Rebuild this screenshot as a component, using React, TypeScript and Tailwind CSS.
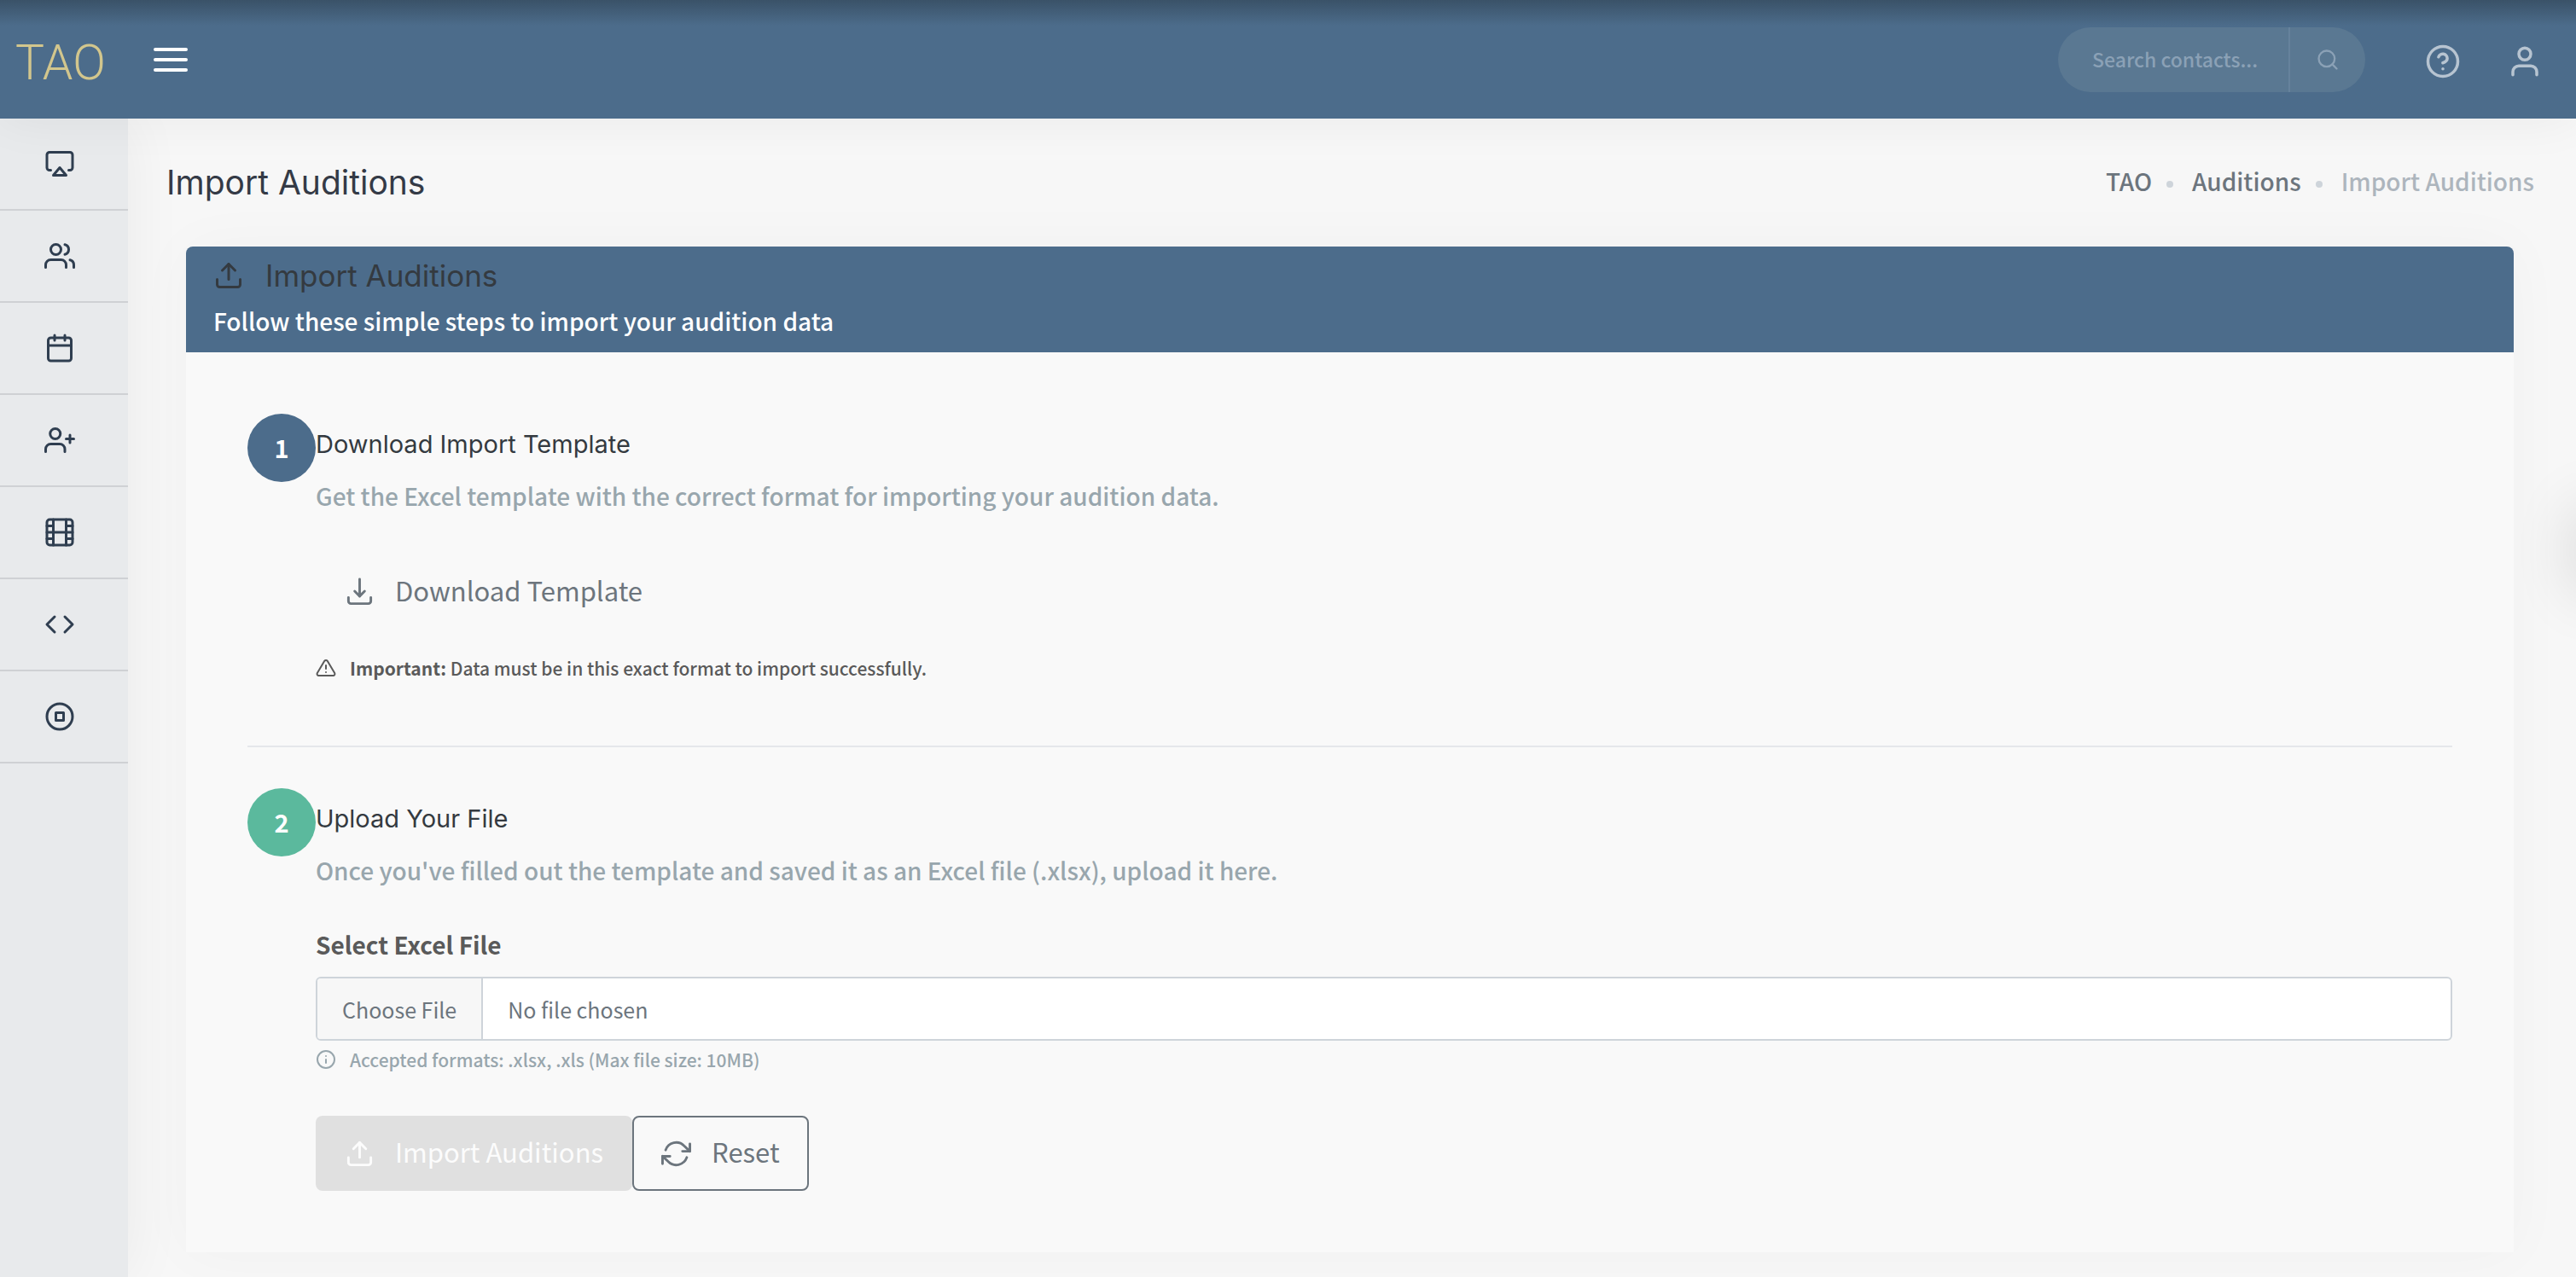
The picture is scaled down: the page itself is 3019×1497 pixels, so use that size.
import React from "react";
import {
  FiAirplay,
  FiAlertTriangle,
  FiCalendar,
  FiCode,
  FiFilm,
  FiHelpCircle,
  FiInfo,
  FiRefreshCw,
  FiSearch,
  FiStopCircle,
  FiUpload,
  FiUser,
  FiUserPlus,
  FiUsers,
} from "react-icons/fi";

const navItems = [
  { label: "Dashboard", Icon: FiAirplay },
  { label: "Contacts", Icon: FiUsers },
  { label: "Calendar", Icon: FiCalendar },
  { label: "Add contact", Icon: FiUserPlus },
  { label: "Auditions", Icon: FiFilm },
  { label: "Links", Icon: FiCode },
  { label: "Recordings", Icon: FiStopCircle },
];

function DownloadIcon({ className }: { className?: string }) {
  return (
    <svg
      className={className}
      viewBox="0 0 24 24"
      fill="none"
      stroke="currentColor"
      strokeWidth="2"
      strokeLinecap="round"
      strokeLinejoin="round"
      aria-hidden="true"
    >
      <path d="M21 16v3a2 2 0 0 1-2 2H5a2 2 0 0 1-2-2v-3" />
      <polyline points="8 11 12 15 16 11" />
      <line x1="12" y1="15" x2="12" y2="1.3" />
    </svg>
  );
}

function Header() {
  return (
    <header className="relative z-10 flex h-[139px] items-center bg-[#4c6c8b] bg-linear-to-b from-[#3a5268] to-[#4c6c8b] to-[30px] shadow-[0_0_60px_rgba(0,0,0,0.06)]">
      <a
        href="#home"
        className="w-[150px] pt-2 pl-[18px] font-['Roboto'] text-[57px] leading-[60px] font-light text-[#d2c68d]"
      >
        TAO
      </a>
      <button type="button" aria-label="Toggle menu" className="ml-[30px] flex flex-col gap-2">
        <span className="h-1 w-10 rounded-full bg-white" />
        <span className="h-1 w-10 rounded-full bg-white" />
        <span className="h-1 w-10 rounded-full bg-white" />
      </button>
      <form className="ml-auto flex h-[76px] w-[360px] overflow-hidden rounded-full bg-[#5a7892]">
        <input
          type="text"
          aria-label="Search contacts"
          placeholder="Search contacts..."
          className="min-w-0 flex-1 pl-10 text-[23px] font-medium text-white outline-none placeholder:text-[#8ba1b6]"
        />
        <button
          type="button"
          aria-label="Search"
          className="flex w-[90px] items-center justify-center border-l-2 border-[#66829c] text-[#8ba1b6]"
        >
          <FiSearch className="size-7" />
        </button>
      </form>
      <div className="flex gap-[54px] pt-1 pr-[39px] pl-[70px] text-[#b7c4d1]">
        <button type="button" aria-label="Help">
          <FiHelpCircle className="size-[42px]" />
        </button>
        <button type="button" aria-label="Account">
          <FiUser className="size-[42px]" />
        </button>
      </div>
    </header>
  );
}

function Sidebar() {
  return (
    <nav className="w-[150px] shrink-0 bg-[#e8eaec] shadow-[0_0_70px_rgba(0,0,0,0.06)]">
      <ul>
        {navItems.map(({ label, Icon }) => (
          <li key={label} className="border-b-2 border-[#cfd1d4]">
            <a
              href="#nav"
              aria-label={label}
              className="flex h-[106px] items-center justify-center pr-[10px] text-[#2f3e50]"
            >
              <Icon className="size-9" />
            </a>
          </li>
        ))}
      </ul>
    </nav>
  );
}

function Step({
  number,
  badge,
  title,
  text,
  children,
}: {
  number: number;
  badge: string;
  title: string;
  text: string;
  children: React.ReactNode;
}) {
  return (
    <section className="flex">
      <div
        className={`flex size-20 shrink-0 items-center justify-center rounded-full pb-0.5 text-[29px] leading-10 font-bold text-white ${badge}`}
      >
        {number}
      </div>
      <div className="min-w-0 flex-1 pt-4">
        <h3 className="font-['Inter'] text-[29px] leading-10 font-normal text-[#343a40]">{title}</h3>
        <p className="mt-5 text-[28px] leading-10 text-[#98a6ad]">{text}</p>
        {children}
      </div>
    </section>
  );
}

export default function App() {
  return (
    <div className="relative flex min-h-screen flex-col overflow-hidden bg-[#f7f7f7] font-['Noto_Sans_CJK_SC',sans-serif] font-medium text-[#6c757d]">
      <Header />
      <div className="flex flex-1">
        <Sidebar />
        <main className="min-w-0 flex-1 pb-[29px]">
          <div className="flex h-[150px] items-center justify-between pr-[49px] pl-[45px]">
            <h1 className="font-['Inter'] text-[39px] leading-[56px] font-normal text-[#343a46]">
              Import Auditions
            </h1>
            <nav aria-label="Breadcrumb" className="pb-1">
              <ol className="flex items-center text-[28px] leading-10">
                <li>
                  <a href="#tao">TAO</a>
                </li>
                <li aria-hidden="true" className="mt-2 mr-[22px] ml-[17px] size-2 rounded-full bg-[#ced4da]" />
                <li>
                  <a href="#auditions">Auditions</a>
                </li>
                <li aria-hidden="true" className="mt-2 mr-[22px] ml-[17px] size-2 rounded-full bg-[#ced4da]" />
                <li className="text-[#adb5bd]">Import Auditions</li>
              </ol>
            </nav>
          </div>

          <div className="mr-[73px] ml-[68px] rounded-t-lg bg-[#f9f9f9] shadow-[0_0_70px_rgba(0,0,0,0.03)]">
            <div className="rounded-t-lg bg-[#4c6c8b] px-8 pt-[14px] pb-[15px]">
              <h2 className="flex h-10 items-center gap-[25px] font-['Inter'] text-[35px] font-normal text-[#343a40]">
                <FiUpload className="size-9" />
                Import Auditions
              </h2>
              <p className="mt-[11px] text-[28px] leading-[44px] text-white">
                Follow these simple steps to import your audition data
              </p>
            </div>

            <div className="p-[72px]">
              <Step
                number={1}
                badge="bg-[#4c6c8b]"
                title="Download Import Template"
                text="Get the Excel template with the correct format for importing your audition data."
              >
                <button
                  type="button"
                  className="mt-[49px] flex h-[88px] items-center gap-6 px-[34px] text-[31px] font-normal"
                >
                  <DownloadIcon className="size-[35px]" />
                  <span className="pb-1">Download Template</span>
                </button>
                <p className="mt-[27px] flex items-center gap-4 text-[21px] leading-9 text-[#5a5a5a]">
                  <FiAlertTriangle className="size-6" />
                  <span>
                    <strong>Important:</strong> Data must be in this exact format to import successfully.
                  </span>
                </p>
              </Step>

              <hr className="mt-[73px] mb-12 border-t-2 border-[#e5e7eb]" />

              <Step
                number={2}
                badge="bg-[#5bb99d]"
                title="Upload Your File"
                text="Once you've filled out the template and saved it as an Excel file (.xlsx), upload it here."
              >
                <label
                  htmlFor="excel-file"
                  className="mt-[47px] block text-[28px] leading-10 font-bold text-[#5a5a5a]"
                >
                  Select Excel File
                </label>
                <input
                  id="excel-file"
                  type="file"
                  accept=".xlsx,.xls"
                  className="mt-[18px] block h-[75px] w-full rounded-md border-2 border-[#ced4da] bg-white text-[25px] leading-10 font-normal file:mr-[29px] file:h-[71px] file:border-r-2 file:border-solid file:border-[#ced4da] file:bg-[#f7f7f7] file:px-[29px] file:font-normal file:text-[#6c757d]"
                />
                <p className="mt-1 flex items-center gap-4 text-[21px] leading-9 text-[#98a6ad]">
                  <FiInfo className="size-6" />
                  Accepted formats: .xlsx, .xls (Max file size: 10MB)
                </p>
                <div className="mt-12 flex text-[31px] font-normal">
                  <button
                    type="button"
                    disabled
                    className="flex h-[88px] items-center gap-6 rounded-lg bg-[#e0e0e0] px-[34px] text-[#fcfcfc]"
                  >
                    <FiUpload className="size-[35px]" />
                    <span className="pb-1">Import Auditions</span>
                  </button>
                  <button
                    type="reset"
                    className="flex h-[88px] items-center gap-6 rounded-lg border-2 border-[#6c757d] px-8"
                  >
                    <FiRefreshCw className="size-[35px]" />
                    <span className="pb-1">Reset</span>
                  </button>
                </div>
              </Step>
            </div>
          </div>
        </main>
      </div>
      <div
        aria-hidden="true"
        className="absolute top-[590px] -right-10 h-[110px] w-10 rounded-full shadow-[0_0_70px_rgba(0,0,0,0.16)]"
      />
    </div>
  );
}
